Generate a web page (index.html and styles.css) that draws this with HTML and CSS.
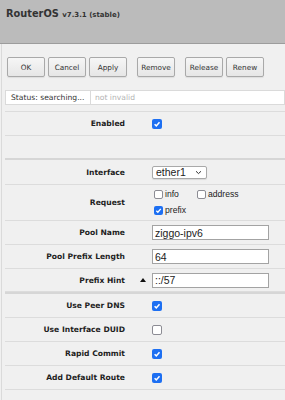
FILE: index.html
```html
<!DOCTYPE html>
<html>
<head>
<meta charset="utf-8">
<link rel="stylesheet" href="styles.css">
</head>
<body>
<div class="header">
  <div class="title">RouterOS <span class="ver">v7.3.1 (stable)</span></div>
</div>
<div class="main">
  <div class="toolbar">
    <button class="btn">OK</button>
    <button class="btn">Cancel</button>
    <button class="btn">Apply</button>
    <button class="btn grp">Remove</button>
    <button class="btn grp">Release</button>
    <button class="btn">Renew</button>
  </div>
  <div class="statusbar">
    <div class="st1">Status: searching...</div>
    <div class="st2">not invalid</div>
  </div>
  <div class="row">
    <div class="lbl">Enabled</div><div class="mid"></div>
    <div class="val"><span class="cb on"><svg viewBox="0 0 10 10" width="10" height="10"><path d="M2.6 5.2 L4.3 6.9 L7.5 3.2" fill="none" stroke="#fff" stroke-width="1.5"/></svg></span></div>
  </div>
  <div class="blank"></div>
  <div class="row sect r24">
    <div class="lbl">Interface</div><div class="mid"></div>
    <div class="val"><div class="sel"><span>ether1</span><svg viewBox="0 0 8 6" width="7" height="5"><path d="M1 1.5 L4 4.3 L7 1.5" fill="none" stroke="#333" stroke-width="1.2"/></svg></div></div>
  </div>
  <div class="row req">
    <div class="lbl">Request</div><div class="mid"></div>
    <div class="val">
      <div class="reqgrid">
        <label class="opt"><span class="cb off sm"></span>info</label>
        <label class="opt"><span class="cb off sm"></span>address</label>
        <label class="opt"><span class="cb on sm"><svg viewBox="0 0 10 10" width="9" height="9"><path d="M2.6 5.2 L4.3 6.9 L7.5 3.2" fill="none" stroke="#fff" stroke-width="1.5"/></svg></span>prefix</label>
      </div>
    </div>
  </div>
  <div class="row">
    <div class="lbl">Pool Name</div><div class="mid"></div>
    <div class="val"><input class="inp" type="text" value="ziggo-ipv6"></div>
  </div>
  <div class="row">
    <div class="lbl">Pool Prefix Length</div><div class="mid"></div>
    <div class="val"><input class="inp" type="text" value="64"></div>
  </div>
  <div class="row r22">
    <div class="lbl">Prefix Hint</div><div class="mid"><span class="tri"></span></div>
    <div class="val"><input class="inp" type="text" value="::/57"></div>
  </div>
  <div class="row sect">
    <div class="lbl">Use Peer DNS</div><div class="mid"></div>
    <div class="val"><span class="cb on"><svg viewBox="0 0 10 10" width="10" height="10"><path d="M2.6 5.2 L4.3 6.9 L7.5 3.2" fill="none" stroke="#fff" stroke-width="1.5"/></svg></span></div>
  </div>
  <div class="row">
    <div class="lbl">Use Interface DUID</div><div class="mid"></div>
    <div class="val"><span class="cb off"></span></div>
  </div>
  <div class="row">
    <div class="lbl">Rapid Commit</div><div class="mid"></div>
    <div class="val"><span class="cb on"><svg viewBox="0 0 10 10" width="10" height="10"><path d="M2.6 5.2 L4.3 6.9 L7.5 3.2" fill="none" stroke="#fff" stroke-width="1.5"/></svg></span></div>
  </div>
  <div class="row">
    <div class="lbl">Add Default Route</div><div class="mid"></div>
    <div class="val"><span class="cb on"><svg viewBox="0 0 10 10" width="10" height="10"><path d="M2.6 5.2 L4.3 6.9 L7.5 3.2" fill="none" stroke="#fff" stroke-width="1.5"/></svg></span></div>
  </div>
</div>
</body>
</html>
```
FILE: styles.css
```css
html, body {
  margin: 0;
  padding: 0;
  background: #f0f0f0;
  font-family: "DejaVu Sans", sans-serif;
  color: #222;
  height: 100%;
}
.header {
  height: 43px;
  background: #bbbbbb;
  border-bottom: 1px solid #9c9c9c;
  padding-left: 6px;
  box-sizing: content-box;
}
.title {
  padding-top: 8px;
  font-size: 9.8px;
  line-height: 12px;
  font-weight: bold;
  color: #333;
}
.ver {
  font-size: 7px;
}
.main {
  margin-left: 1px;
  border-left: 1px solid #dadada;
  padding-left: 3px;
  min-height: 356px;
}
.toolbar {
  display: flex;
  gap: 3px;
  padding: 13px 0 0 2px;
}
.btn {
  width: 38px;
  height: 20px;
  margin: 0;
  padding: 0;
  border: 1px solid #a9a9a9;
  border-radius: 2px;
  background: linear-gradient(#f6f6f6, #e6e6e6);
  box-shadow: 0 1px 1px rgba(0,0,0,0.08);
  font-family: "DejaVu Sans", sans-serif;
  font-size: 7.3px;
  color: #333;
}
.btn.grp {
  margin-left: 7px;
}
.statusbar {
  display: flex;
  margin-top: 13px;
  height: 15px;
  padding-bottom: 6px;
  border-bottom: 1px solid #dcdcdc;
  font-size: 7.6px;
}
.st1, .st2 {
  height: 15px;
  box-sizing: border-box;
  background: #fff;
  border: 1px solid #dadada;
  line-height: 13px;
}
.st1 {
  width: 86px;
  padding-left: 5px;
  color: #333;
}
.st2 {
  flex: 1;
  border-left: none;
  padding-left: 4px;
  color: #b4b4b4;
}
.row {
  display: flex;
  align-items: center;
  height: 23px;
  border-bottom: 1px solid #dcdcdc;
}
.row.r24 { height: 24px; }
.row.r22 { height: 22px; }
.row.sect {
  border-top: 2px solid #d6d6d6;
}
.row.req { height: 35px; }
.blank {
  height: 22px;
}
.lbl {
  width: 120px;
  text-align: right;
  font-weight: bold;
  font-size: 7.6px;
  color: #1e1e1e;
}
.mid {
  width: 27px;
  display: flex;
  align-items: center;
}
.val {
  flex: 1;
  display: flex;
  align-items: center;
}
.cb {
  display: inline-block;
  width: 10px;
  height: 10px;
  box-sizing: border-box;
  border-radius: 2px;
  flex: none;
}
.cb svg { display: block; }
.cb.on {
  background: #1d6ff2;
}
.cb.off {
  background: #fff;
  border: 1px solid #8c8c94;
}
.cb.sm {
  width: 9px;
  height: 9px;
  margin-right: 2px;
}
.reqgrid {
  display: grid;
  grid-template-columns: 43px auto;
  row-gap: 7px;
  padding-left: 2px;
}
.opt {
  display: flex;
  align-items: center;
  font-family: "Liberation Sans", sans-serif;
  font-size: 8.6px;
  color: #222;
  line-height: 9px;
}
.sel {
  width: 55px;
  height: 13px;
  box-sizing: border-box;
  border: 1px solid #a9a9a9;
  border-radius: 2px;
  background: #fff;
  display: flex;
  align-items: center;
  justify-content: space-between;
  padding: 0 4px 0 3px;
  font-family: "Liberation Sans", sans-serif;
  font-size: 10.5px;
  color: #222;
  box-shadow: 0 1px 1px rgba(0,0,0,0.1);
}
.inp {
  width: 117px;
  height: 15px;
  box-sizing: border-box;
  margin: 0;
  padding: 0 2px;
  border: 1px solid #a3a3a3;
  border-radius: 0;
  background: #fff;
  font-family: "Liberation Sans", sans-serif;
  font-size: 10.5px;
  color: #222;
  outline: none;
}
.tri {
  margin-left: 15px;
  width: 0;
  height: 0;
  border-left: 3px solid transparent;
  border-right: 3px solid transparent;
  border-bottom: 4px solid #111;
}
```
